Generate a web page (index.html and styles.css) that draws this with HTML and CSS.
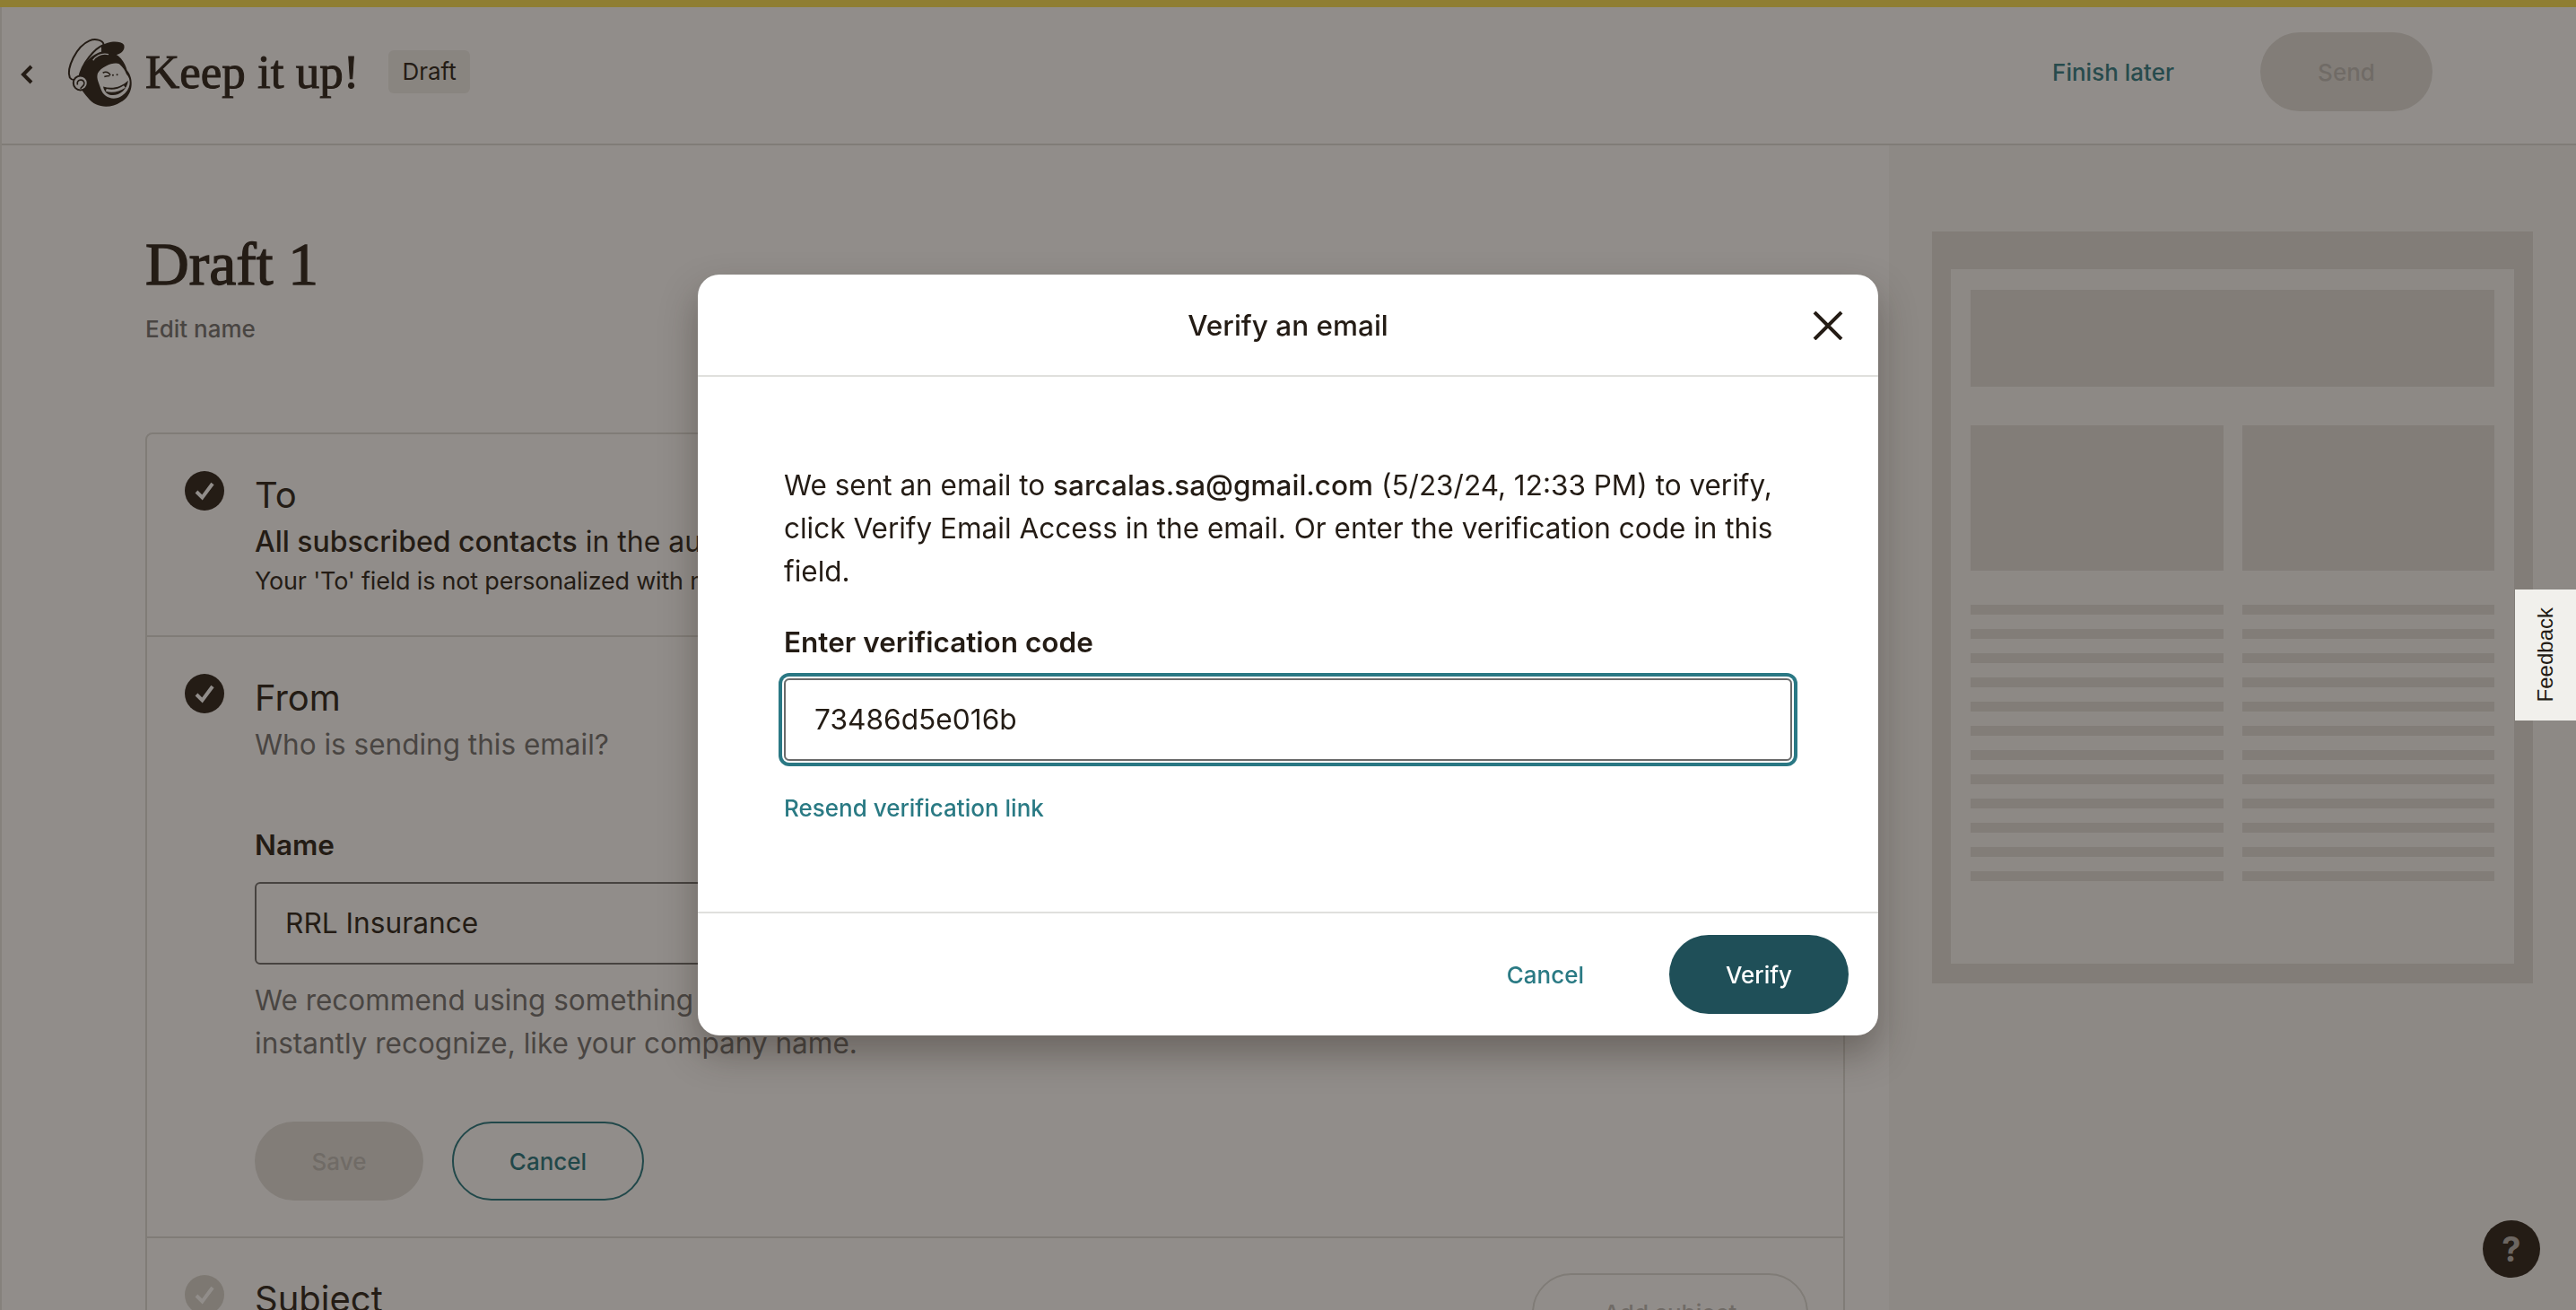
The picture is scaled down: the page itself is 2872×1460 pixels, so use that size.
FILE: index.html
```html
<!DOCTYPE html>
<html lang="en">
<head>
<meta charset="utf-8">
<title>Keep it up!</title>
<link rel="stylesheet" href="styles.css">
</head>
<body>
<div class="page">
  <div class="topbar"></div>
  <header class="header">
    <div class="header-left">
      <svg class="chevron" viewBox="0 0 16 22"><path d="M13 2 L4 11 L13 20"/></svg>
      <svg class="logo" viewBox="70 60 240 250">
        <path class="lg-dark" d="M190 94C210 78 252 74 266 90C272 110 252 122 235 124C215 114 200 110 190 120Z"/>
        <path class="lg-dark" d="M112 205C125 150 165 108 212 112C250 118 270 150 276 175C302 205 296 262 255 282C220 306 170 302 145 268C125 242 112 232 112 205Z"/>
        <path class="lg-brim" d="M84 200C72 170 105 95 150 76C170 68 196 74 198 90C170 100 124 150 114 204C102 210 90 208 84 200Z"/>
        <circle class="lg-brim" cx="120" cy="218" r="24"/>
        <path class="lg-line" d="M110 224C104 204 136 202 132 222C130 230 122 232 120 237"/>
        <path class="lg-face" d="M178 185C192 162 232 146 250 154C264 166 270 177 274 188C292 206 290 240 260 260C232 280 198 268 188 238C182 216 172 205 178 185Z"/>
        <path class="lg-mouth" d="M196 230C225 240 258 232 280 210C276 246 242 266 216 257C204 252 198 242 196 230Z"/>
        <path class="lg-smile" d="M206 242C228 248 250 242 268 230"/>
        <path class="lg-line" d="M195 184C205 178 216 182 220 192M200 197C206 195 212 194 218 194"/>
        <circle class="lg-dot" cx="229" cy="192" r="3"/>
        <circle class="lg-dot" cx="243" cy="190" r="3"/>
        <path class="lg-hair" d="M162 142C175 125 195 118 214 122"/>
      </svg>
      <span class="brand">Keep it up!</span>
      <span class="badge">Draft</span>
    </div>
    <div class="header-right">
      <a class="link link-strong">Finish later</a>
      <button class="btn btn-disabled btn-send">Send</button>
    </div>
  </header>
  <div class="content">
    <main class="main">
      <h1 class="title">Draft 1</h1>
      <a class="edit">Edit name</a>
      <section class="card">
        <div class="row row-to">
          <svg class="check" viewBox="0 0 44 44"><circle cx="22" cy="22" r="22"/><path d="M13 23 L19.5 29.5 L31 14"/></svg>
          <div class="row-body">
            <h2 class="row-title">To</h2>
            <p class="row-strong"><b>All subscribed contacts</b> in the audience RRL Insurance.</p>
            <p class="row-small">Your 'To' field is not personalized with merge tags.</p>
          </div>
        </div>
        <div class="row row-from">
          <svg class="check" viewBox="0 0 44 44"><circle cx="22" cy="22" r="22"/><path d="M13 23 L19.5 29.5 L31 14"/></svg>
          <div class="row-body">
            <h2 class="row-title">From</h2>
            <p class="row-sub">Who is sending this email?</p>
            <label class="label name-label">Name</label>
            <div class="input name-input">RRL Insurance</div>
            <p class="help">We recommend using something your subscribers will<br>instantly recognize, like your company name.</p>
            <div class="actions">
              <button class="btn btn-disabled btn-save">Save</button>
              <button class="btn btn-outline">Cancel</button>
            </div>
          </div>
        </div>
        <div class="row row-subject">
          <svg class="check check-off" viewBox="0 0 44 44"><circle cx="22" cy="22" r="22"/><path d="M13 23 L19.5 29.5 L31 14"/></svg>
          <div class="row-body">
            <h2 class="row-title">Subject</h2>
          </div>
          <button class="btn btn-ghost">Add subject</button>
        </div>
      </section>
    </main>
    <aside class="preview">
      <div class="frame">
        <div class="sheet">
          <div class="banner"></div>
          <div class="cols">
            <div class="col"><div class="col-img"></div><div class="bars"><i></i><i></i><i></i><i></i><i></i><i></i><i></i><i></i><i></i><i></i><i></i><i></i></div></div>
            <div class="col"><div class="col-img"></div><div class="bars"><i></i><i></i><i></i><i></i><i></i><i></i><i></i><i></i><i></i><i></i><i></i><i></i></div></div>
          </div>
        </div>
      </div>
    </aside>
  </div>
  <button class="help-btn">?</button>
</div>
<div class="overlay"></div>
<button class="feedback"><span>Feedback</span></button>
<div class="modal">
  <div class="modal-head">
    <h2 class="modal-title">Verify an email</h2>
    <svg class="close" viewBox="0 0 34 32"><path d="M2 1 L32 31 M32 1 L2 31"/></svg>
  </div>
  <div class="modal-body">
    <p class="modal-text">We sent an email to <b>sarcalas.sa@gmail.com</b> (5/23/24, 12:33 PM) to verify, click Verify Email Access in the email. Or enter the verification code in this field.</p>
    <label class="label code-label">Enter verification code</label>
    <div class="input code-input">73486d5e016b</div>
    <a class="link resend">Resend verification link</a>
  </div>
  <div class="modal-foot">
    <a class="link foot-cancel">Cancel</a>
    <button class="btn btn-primary">Verify</button>
  </div>
</div>
</body>
</html>
```
FILE: styles.css
```css
* { box-sizing: border-box; }
html, body { margin: 0; height: 100%; overflow: hidden; }
body { font-family: Inter, "Liberation Sans", sans-serif; color: #241c15; background: #fff; font-size: 31.5px; }
h1, h2, p { margin: 0; font-weight: 400; }
b { font-weight: 500; }
button { font-family: inherit; border: 0; cursor: pointer; }

.page { height: 1460px; display: flex; flex-direction: column; border-left: 2px solid #e6e6e2; position: relative; }
.topbar { height: 8px; margin-left: -2px; background: #fae04f; flex: none; }
.header { height: 154px; flex: none; border-bottom: 2px solid #dcdcd8; display: flex; justify-content: space-between; align-items: center; padding: 0 160px 8px 20px; }
.header-left, .header-right { display: flex; align-items: center; }
.chevron { width: 16px; height: 22px; fill: none; stroke: #241c15; stroke-width: 4; position: relative; top: 3px; }
.logo { width: 80px; height: 83px; margin-left: 35px; position: relative; top: 1px; }
.lg-dark { fill: #241c15; }
.lg-brim { fill: #fff; stroke: #241c15; stroke-width: 6; }
.lg-line { fill: none; stroke: #241c15; stroke-width: 5; }
.lg-face { fill: #fff; }
.lg-mouth { fill: #241c15; }
.lg-smile { fill: none; stroke: #fff; stroke-width: 9; }
.lg-dot { fill: #241c15; }
.lg-hair { fill: none; stroke: #fff; stroke-width: 4; }
.brand { font-family: "Liberation Serif", serif; font-size: 53px; margin-left: 9px; -webkit-text-stroke: 1px #241c15; }
.badge { margin-left: 33px; height: 48px; padding: 0 15px; background: #efeeea; border-radius: 6px; font-size: 26px; line-height: 48px; }
.link { color: #2a7a84; font-weight: 500; font-size: 26px; }
.link-strong { margin-right: 96px; }
.btn { height: 88px; border-radius: 44px; font-size: 26px; font-weight: 500; }
.btn-disabled { background: #e0dfdb; color: #bdbbb7; }
.btn-send { width: 192px; }

.content { flex: 1; display: flex; min-height: 0; }
.main { width: 2104px; padding: 93px 49px 0 160px; flex: none; }
.title { font-family: "Liberation Serif", serif; font-size: 67.5px; line-height: 80px; -webkit-text-stroke: 1.4px #241c15; }
.edit { display: block; margin-top: 16px; color: #6f6f6f; font-weight: 500; font-size: 26px; line-height: 32px; }
.card { margin-top: 99px; border: 2px solid #dcdcd8; border-radius: 8px; }
.row { display: flex; padding: 41px 40px 0 42px; position: relative; border-bottom: 2px solid #dcdcd8; }
.row-to { height: 226px; }
.row-from { height: 670px; }
.row-subject { border-bottom: 0; }
.check { width: 44px; height: 44px; flex: none; margin-right: 34px; }
.check circle { fill: #241c15; }
.check path { fill: none; stroke: #fff; stroke-width: 4; }
.check-off circle { fill: #d6d5ce; }
.row-body { flex: 1; }
.row-title { font-size: 40px; line-height: 48px; margin-top: 3px; }
.row-strong { font-size: 32px; line-height: 40px; margin-top: 8px; white-space: nowrap; }
.row-small { font-size: 27px; line-height: 36px; margin-top: 6px; white-space: nowrap; letter-spacing: -0.2px; }
.row-sub { color: #6f6f6f; line-height: 40px; margin-top: 8px; }
.label { display: block; font-weight: 600; font-size: 31.5px; line-height: 40px; }
.name-label { margin-top: 72px; }
.input { height: 92px; border: 2px solid #6a6a6a; border-radius: 6px; padding: 0 32px; line-height: 88px; font-size: 31.7px; }
.name-input { margin-top: 21px; width: 900px; }
.help { color: #6f6f6f; line-height: 48px; margin-top: 16px; }
.actions { display: flex; gap: 32px; margin-top: 63px; }
.btn-save { width: 188px; }
.btn-outline { width: 214px; background: none; border: 2px solid #1f747e; color: #1f747e; }
.btn-ghost { position: absolute; top: 39px; right: 39px; width: 308px; background: none; border: 2px solid #dcdcd8; color: #bdbbb7; }

.preview { flex: 1; background: #f6f6f4; padding: 96px 48px 0; }
.frame { width: 670px; height: 838px; background: #e0dfdb; padding: 42px 21px 22px; }
.sheet { height: 100%; background: #f6f6f4; padding: 23px 22px; }
.banner { height: 108px; background: #e0dfdb; }
.cols { display: flex; gap: 21px; margin-top: 43px; }
.col { flex: 1; }
.col-img { height: 162px; background: #e0dfdb; }
.bars { margin-top: 38px; display: flex; flex-direction: column; gap: 16px; }
.bars i { display: block; height: 11px; background: #e0dfdb; }

.help-btn { position: absolute; left: 2766px; top: 1360px; width: 64px; height: 64px; border-radius: 50%; background: #241c15; color: #b5b0ac; font-size: 38px; font-weight: 700; padding: 0; }

.overlay { position: fixed; inset: 0; background: rgba(36, 28, 21, 0.5); }
.feedback { position: fixed; right: 0; top: 657px; width: 68px; height: 146px; background: #f1f0ec; padding: 0; display: flex; align-items: center; justify-content: center; }
.feedback span { writing-mode: vertical-rl; transform: rotate(180deg); font-family: "Liberation Sans", sans-serif; font-size: 24px; color: #241c15; }

.modal { position: fixed; left: 778px; top: 306px; width: 1316px; height: 848px; background: #fff; border-radius: 24px; box-shadow: 0 20px 40px rgba(36, 28, 21, 0.35); display: flex; flex-direction: column; }
.modal-head { height: 114px; flex: none; border-bottom: 2px solid #e0e0dd; display: flex; align-items: center; justify-content: center; position: relative; }
.modal-title { font-size: 31.5px; font-weight: 500; }
.close { position: absolute; right: 39px; top: 41px; width: 34px; height: 32px; fill: none; stroke: #241c15; stroke-width: 4; }
.modal-body { flex: 1; padding: 97px 96px 0; }
.modal-text { line-height: 48px; }
.code-label { margin-top: 31px; line-height: 48px; }
.code-input { margin-top: 16px; width: 1124px; box-shadow: 0 0 0 2px #fff, 0 0 0 6px #2a7884; }
.resend { display: block; margin-top: 33px; line-height: 40px; }
.modal-foot { height: 138px; flex: none; border-top: 2px solid #e0e0dd; display: flex; align-items: center; justify-content: flex-end; padding: 0 33px 0 0; }
.foot-cancel { margin-right: 95px; }
.btn-primary { width: 200px; background: #1f4f58; color: #fff; }
```
